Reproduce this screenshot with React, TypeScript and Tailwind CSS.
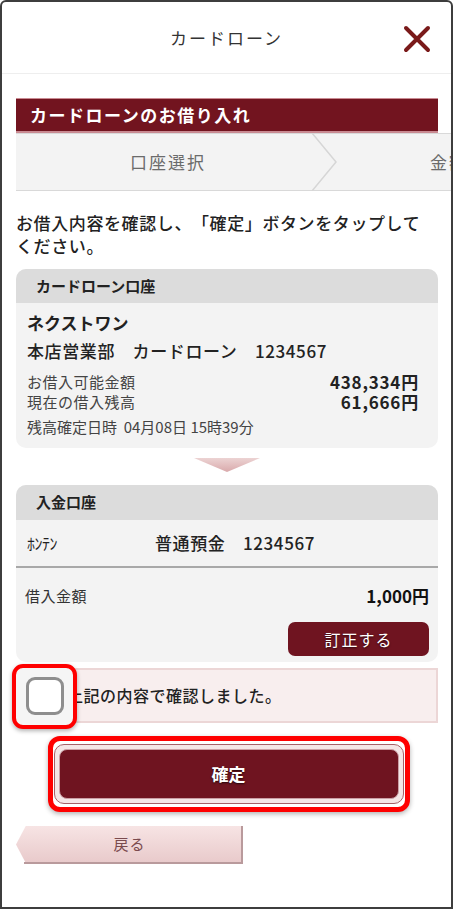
import React from "react";

const font = { fontFamily: '"Noto Sans CJK JP", "Noto Sans", sans-serif' };

function CloseIcon() {
  return (
    <svg width="28" height="28" viewBox="0 0 28 28">
      <path d="M3 3 L25 25 M25 3 L3 25" stroke="#7a1a1a" strokeWidth="4" strokeLinecap="round" />
    </svg>
  );
}

function StepBar() {
  return (
    <div className="relative h-[58px] w-[437px] bg-[#f3f3f3] border-y border-[#d9d9d9] flex items-center text-[17px] tracking-[2px] text-[#6b6b6b]">
      <div className="w-[300px] text-center pl-[4px]">口座選択</div>
      <svg className="absolute left-[290px] top-[-1px]" width="40" height="58" viewBox="0 0 40 58">
        <path d="M6 0 L30 29 L6 58" fill="none" stroke="#d6d6d6" strokeWidth="1.5" />
      </svg>
      <div className="ml-auto w-[23px] overflow-hidden whitespace-nowrap">金額</div>
    </div>
  );
}

export default function App() {
  return (
    <div style={font} className="w-[453px] h-[909px] bg-white border-2 border-[#3d3d3d] rounded-tl-[6px] rounded-tr-[6px] overflow-hidden flex flex-col [text-spacing-trim:space-all]">
      {/* header */}
      <div className="h-[72px] shrink-0 relative flex items-center justify-center border-b border-[#eeeeee]">
        <span className="text-[17px] text-[#333] tracking-[2px]">カードローン</span>
        <div className="absolute right-[20px] top-[23px]">
          <CloseIcon />
        </div>
      </div>

      <div className="pl-[14px] pt-[24px]">
        <div className="w-[422px] h-[35px] bg-[#72141f] border-t border-b-2 border-t-[#c98a92] border-b-[#c98a92] flex items-center pl-[14px] text-white text-[17px] font-bold tracking-[1.5px]">
          カードローンのお借り入れ
        </div>
        <StepBar />
      </div>

      <div className="px-[14px]">
        <p className="mt-[20px] text-[17px] leading-[23px] font-medium text-[#222] tracking-[0.6px]">
          お借入内容を確認し、「確定」ボタンをタップして
          <br />
          ください。
        </p>

        {/* card loan account */}
        <div className="mt-[12px] w-[422px] rounded-[10px] overflow-hidden bg-[#f3f3f3]">
          <div className="h-[34px] bg-[#dcdcdc] flex items-center pl-[20px] text-[15px] font-bold text-[#222]">
            カードローン口座
          </div>
          <div className="px-[11px] pt-[6px] pb-[11px] text-[#222]">
            <div className="text-[17px] font-bold leading-[28px]">ネクストワン</div>
            <div className="text-[17px] font-medium leading-[28px] tracking-[0.6px]">本店営業部　カードローン　1234567</div>
            <div className="mt-[7px] flex justify-between items-center h-[20px]">
              <span className="text-[15px] leading-[20px] text-[#444] tracking-[0.5px]">お借入可能金額</span>
              <span className="text-[17px] leading-[20px] font-bold pr-[8px] tracking-[0.8px]">438,334円</span>
            </div>
            <div className="flex justify-between items-center h-[20px]">
              <span className="text-[15px] leading-[20px] text-[#444] tracking-[0.5px]">現在の借入残高</span>
              <span className="text-[17px] leading-[20px] font-bold pr-[8px] tracking-[0.8px]">61,666円</span>
            </div>
            <div className="mt-[5px] text-[15px] text-[#444] leading-[20px]">残高確定日時&nbsp;&nbsp;04月08日 15時39分</div>
          </div>
        </div>

        <div className="flex justify-center mt-[10px]">
          <svg width="66" height="14" viewBox="0 0 66 14">
            <defs>
              <linearGradient id="ar" x1="0" y1="0" x2="0" y2="1">
                <stop offset="0" stopColor="#ecd3d3" />
                <stop offset="1" stopColor="#d9a9ab" />
              </linearGradient>
            </defs>
            <path d="M0 0 H66 L33 14 Z" fill="url(#ar)" />
          </svg>
        </div>

        {/* deposit account */}
        <div className="mt-[13px] w-[422px] rounded-[10px] overflow-hidden bg-[#f3f3f3]">
          <div className="h-[35px] bg-[#dcdcdc] flex items-center pl-[20px] text-[15px] font-bold text-[#222]">
            入金口座
          </div>
          <div className="h-[48px] flex items-center px-[11px] text-[#222] border-b-2 border-[#a8a8a8]">
            <span className="w-[128px] text-[16px] tracking-[-0.5px]">ﾎﾝﾃﾝ</span>
            <span className="text-[17px] font-medium tracking-[0.6px]">普通預金　1234567</span>
          </div>
          <div className="px-[9px] pt-[15px] pb-[6px]">
            <div className="flex justify-between items-center">
              <span className="text-[15px] text-[#333] tracking-[0.5px]">借入金額</span>
              <span className="text-[17px] font-bold text-[#111]">1,000円</span>
            </div>
            <div className="flex justify-end mt-[13px]">
              <button className="w-[141px] h-[34px] rounded-[7px] bg-[#6f1420] text-white text-[16px] tracking-[1px] [text-shadow:0_1px_2px_rgba(0,0,0,0.6)]">
                訂正する
              </button>
            </div>
          </div>
        </div>

        {/* confirm checkbox */}
        <div className="relative mt-[6px] w-[422px] h-[55px] bg-[#f8eeee] border-2 border-[#ecd6d6] flex items-center pl-[49px]">
          <span className="text-[16px] font-medium text-[#222] tracking-[0.5px]">上記の内容で確認しました。</span>
          <div className="absolute left-[-6px] top-[-6px] w-[65px] h-[65px] rounded-[11px] border-[4px] border-[#ff0000] bg-[#f5f5f5] flex items-center justify-center shadow-[0_2px_4px_rgba(0,0,0,0.3)]">
            <div className="w-[38px] h-[38px] rounded-[9px] border-[3px] border-[#8e8e8e] bg-white" />
          </div>
        </div>

        {/* confirm button */}
        <div className="flex justify-center mt-[13px] pl-[4px]">
          <div className="w-[362px] h-[76px] rounded-[12px] border-[5px] border-[#ff0000] bg-white flex items-center justify-center shadow-[0_2px_5px_rgba(0,0,0,0.3)]">
            <div className="w-[350px] h-[60px] rounded-[10px] border border-[#a56068] bg-[#f4e6e6] p-[4px]">
              <div className="w-full h-full rounded-[8px] bg-[#6f1420] border border-[#caa0a6] flex items-center justify-center text-white text-[17px] font-bold [text-shadow:0_1px_2px_rgba(0,0,0,0.7)]">
                確定
              </div>
            </div>
          </div>
        </div>

        {/* back */}
        <div className="mt-[14px] relative w-[227px] h-[38px]">
          <div className="absolute inset-0 bg-gradient-to-b from-[#f7e4e4] to-[#e8c9ca] [clip-path:polygon(10px_0,100%_0,100%_100%,10px_100%,0_50%)]" />
          <div className="absolute right-0 top-0 w-[2px] h-full bg-[#b99a9c]" />
          <div className="absolute left-[8px] right-0 bottom-0 h-[2px] bg-[#b99a9c]" />
          <div className="relative h-full flex items-center justify-center text-[15px] tracking-[1px] text-[#7a4a4e]">戻る</div>
        </div>
      </div>
    </div>
  );
}
